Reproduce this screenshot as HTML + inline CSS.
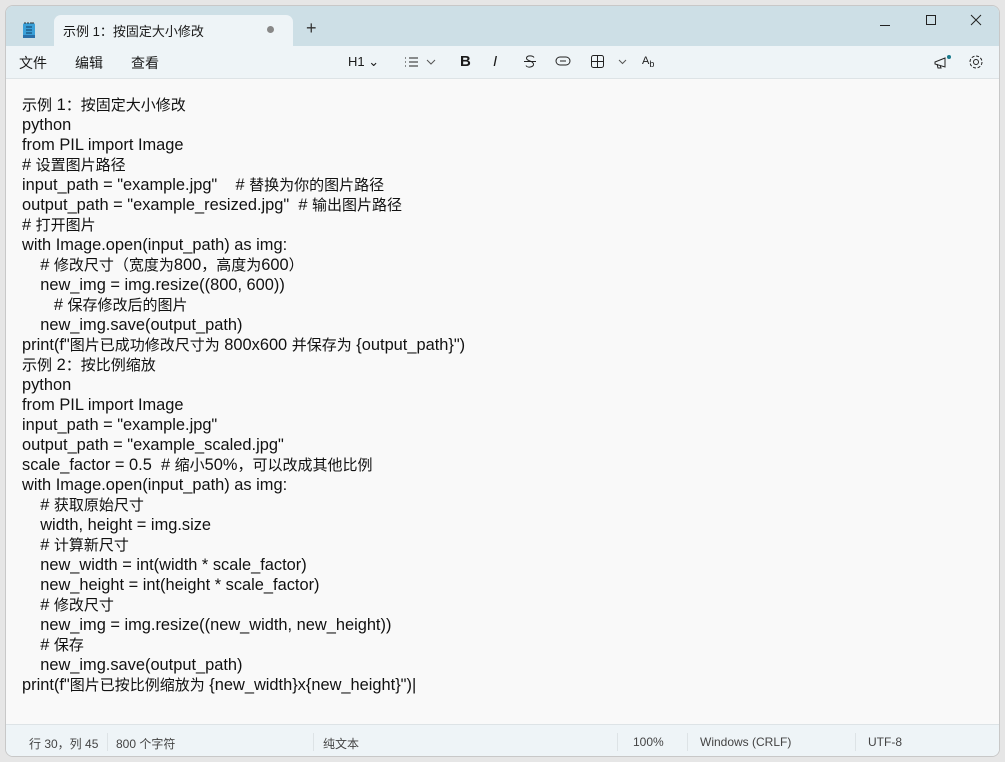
<!DOCTYPE html>
<html><head><meta charset="utf-8"><style>
body{margin:0;width:1005px;height:762px;background:#e6e6e6;font-family:"Liberation Sans","Noto Sans CJK SC",sans-serif;overflow:hidden;position:relative}
.win{position:absolute;left:5px;top:5px;width:995px;height:752px;background:#f9f9f9;border:1px solid #c8c8c8;border-radius:8px;overflow:hidden;box-sizing:border-box}
.title{position:absolute;left:0;top:0;width:100%;height:40px;background:#cddfe6}
.tab{position:absolute;left:48px;top:9px;width:239px;height:31px;background:#eef4f7;border-radius:7px 7px 0 0;font-size:13px;color:#1a1a1a}
.menu{position:absolute;left:0;top:40px;width:100%;height:32px;background:#eef4f7;border-bottom:1px solid #dde3e6;font-size:14px;color:#1a1a1a}
.t{position:absolute}
pre{position:absolute;left:16px;top:89px;margin:0;font-family:"Liberation Sans","Noto Sans CJK SC",sans-serif;font-size:16.4px;line-height:20px;color:#111}
pre i{font-style:normal;font-size:15px;line-height:0}
.status{position:absolute;left:0;top:718px;width:100%;height:34px;background:#eef4f7;border-top:1px solid #dde3e6;font-size:12px;color:#444}
.sep{position:absolute;top:8px;width:1px;height:18px;background:#dde3e6}
</style></head><body>
<div class="win">
<div class="title">
 <svg class="t" style="left:16px;top:15px" width="14" height="18" viewBox="0 0 14 18"><rect x="1" y="2" width="12" height="15" rx="2" fill="#3aa0d8"/><rect x="1" y="14" width="12" height="3" fill="#2a6fa8"/><path d="M4 6h6M4 9h6M4 12h6" stroke="#0e3b63" stroke-width="1"/><path d="M3 1v2M6 1v2M9 1v2M11 1v2" stroke="#333" stroke-width="1"/></svg>
 <div class="tab"><span class="t" style="left:9px;top:6px">示例 1：按固定大小修改</span><span class="t" style="left:213px;top:11px;width:7px;height:7px;border-radius:50%;background:#888"></span></div>
 <span class="t" style="left:300px;top:12px;font-size:18px;color:#333">+</span>
 <svg class="t" style="left:873px;top:13px" width="12" height="12"><path d="M1 6.5h10" stroke="#222"/></svg>
 <svg class="t" style="left:919px;top:8px" width="12" height="12"><rect x="1.5" y="1.5" width="9" height="9" fill="none" stroke="#222"/></svg>
 <svg class="t" style="left:964px;top:8px" width="12" height="12"><path d="M1 1l10 10M11 1L1 11" stroke="#222"/></svg>
</div>
<div class="menu">
 <span class="t" style="left:13px;top:7px">文件</span><span class="t" style="left:69px;top:7px">编辑</span><span class="t" style="left:125px;top:7px">查看</span>
 <span class="t" style="left:342px;top:8px;font-size:13px">H1 ⌄</span>
 <svg class="t" style="left:398px;top:9px" width="34" height="14"><path d="M1 3h1M1 7h1M1 11h1M5 3h9M5 7h9M5 11h9" stroke="#222"/><path d="M23 5l4 4 4-4" fill="none" stroke="#555"/></svg>
 <span class="t" style="left:454px;top:7px;font-weight:bold;font-size:15px">B</span>
 <span class="t" style="left:487px;top:7px;font-style:italic;font-size:15px">I</span>
 <svg class="t" style="left:517px;top:8px" width="14" height="15"><path d="M11 3.5C10 1.5 4 1 3.5 4S10 6.5 10.5 10 4 14 3 11.5M1 7.5h12" fill="none" stroke="#222"/></svg>
 <svg class="t" style="left:549px;top:9px" width="16" height="12"><rect x="1" y="2" width="14" height="8" rx="4" fill="none" stroke="#222"/><path d="M5 6h6" stroke="#222"/></svg>
 <svg class="t" style="left:584px;top:8px" width="40" height="15"><rect x="1.5" y="1.5" width="12" height="12" rx="2" fill="none" stroke="#222"/><path d="M7.5 1.5v12M1.5 7.5h12" stroke="#222"/><path d="M29 6l3.5 3.5L36 6" fill="none" stroke="#555"/></svg>
 <span class="t" style="left:636px;top:9px;font-size:11px">A<sub style="font-size:9px">b</sub></span>
 <svg class="t" style="left:927px;top:8px" width="20" height="18"><path d="M2 8l10-4v9L2 10z M4 10l1 4h3l-1-3" fill="none" stroke="#222"/><circle cx="16" cy="3" r="2" fill="#1a7a8c"/></svg>
 <svg class="t" style="left:962px;top:8px" width="16" height="16"><circle cx="8" cy="8" r="2.5" fill="none" stroke="#222"/><circle cx="8" cy="8" r="6" fill="none" stroke="#222" stroke-dasharray="3 1.7"/></svg>
</div>
<pre><i>示例</i> 1<i>：按固定大小修改</i>
python
from PIL import Image
# <i>设置图片路径</i>
input_path = "example.jpg"    # <i>替换为你的图片路径</i>
output_path = "example_resized.jpg"  # <i>输出图片路径</i>
# <i>打开图片</i>
with Image.open(input_path) as img:
    # <i>修改尺寸（宽度为</i>800<i>，高度为</i>600<i>）</i>
    new_img = img.resize((800, 600))
       # <i>保存修改后的图片</i>
    new_img.save(output_path)
print(f"<i>图片已成功修改尺寸为</i> 800x600 <i>并保存为</i> {output_path}")
<i>示例</i> 2<i>：按比例缩放</i>
python
from PIL import Image
input_path = "example.jpg"
output_path = "example_scaled.jpg"
scale_factor = 0.5  # <i>缩小</i>50%<i>，可以改成其他比例</i>
with Image.open(input_path) as img:
    # <i>获取原始尺寸</i>
    width, height = img.size
    # <i>计算新尺寸</i>
    new_width = int(width * scale_factor)
    new_height = int(height * scale_factor)
    # <i>修改尺寸</i>
    new_img = img.resize((new_width, new_height))
    # <i>保存</i>
    new_img.save(output_path)
print(f"<i>图片已按比例缩放为</i> {new_width}x{new_height}")|</pre>
<div class="status">
 <span class="t" style="left:23px;top:10px">行 30，列 45</span><div class="sep" style="left:101px"></div>
 <span class="t" style="left:110px;top:10px">800 个字符</span><div class="sep" style="left:307px"></div>
 <span class="t" style="left:317px;top:10px">纯文本</span><div class="sep" style="left:611px"></div>
 <span class="t" style="left:627px;top:10px">100%</span><div class="sep" style="left:681px"></div>
 <span class="t" style="left:694px;top:10px">Windows (CRLF)</span><div class="sep" style="left:849px"></div>
 <span class="t" style="left:862px;top:10px">UTF-8</span>
</div>
</div>
</body></html>
